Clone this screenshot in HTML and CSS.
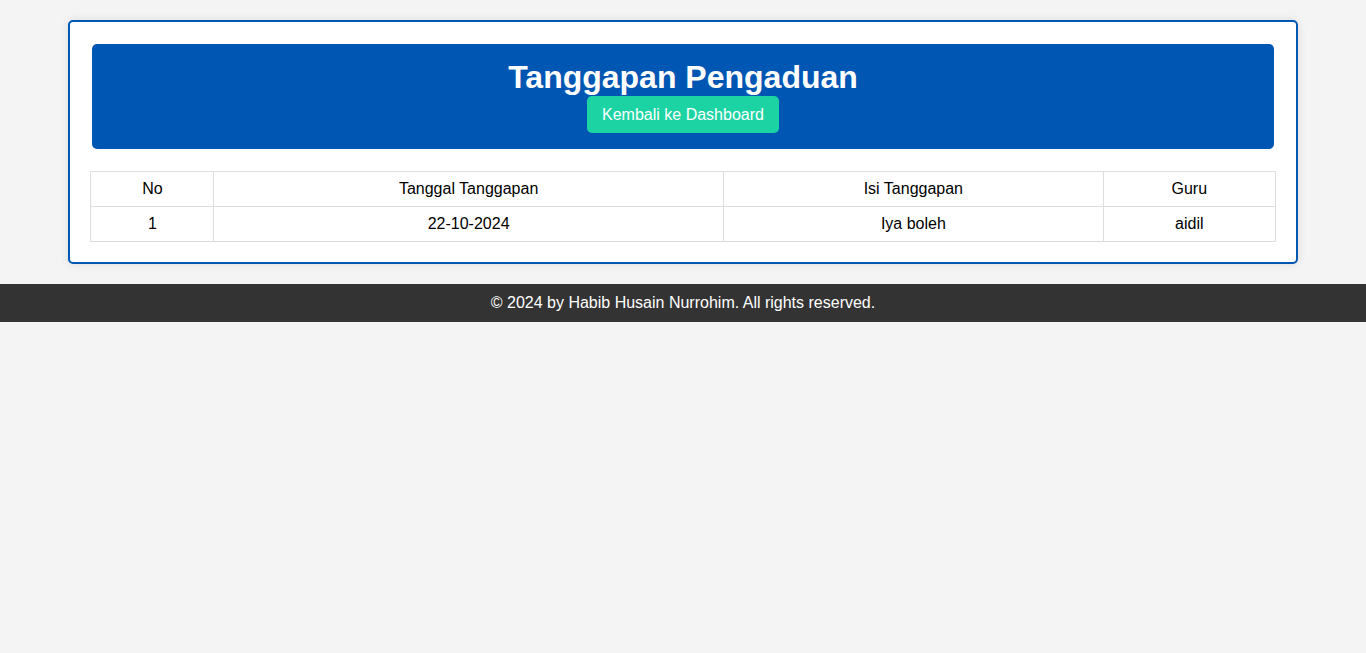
FILE: index.html
```html
<!DOCTYPE html>
<html lang="id">
<head>
<meta charset="utf-8">
<title>Tanggapan Pengaduan</title>
<link rel="stylesheet" href="styles.css">
</head>
<body>
<div class="container">
  <div class="header">
    <h1 class="title">Tanggapan Pengaduan</h1>
    <a class="btn" href="#">Kembali ke Dashboard</a>
  </div>
  <table class="data">
    <thead>
      <tr>
        <th class="c-no">No</th>
        <th class="c-date">Tanggal Tanggapan</th>
        <th class="c-isi">Isi Tanggapan</th>
        <th class="c-guru">Guru</th>
      </tr>
    </thead>
    <tbody>
      <tr>
        <td>1</td>
        <td>22-10-2024</td>
        <td>Iya boleh</td>
        <td>aidil</td>
      </tr>
    </tbody>
  </table>
</div>
<footer class="footer">© 2024 by Habib Husain Nurrohim. All rights reserved.</footer>
</body>
</html>
```

FILE: styles.css
```css
html, body {
  margin: 0;
  padding: 0;
}
body {
  background: #f4f4f4;
  font-family: "Liberation Sans", Arial, sans-serif;
  font-size: 16px;
  color: #000;
}
.container {
  width: 90%;
  margin: 20px auto;
  background: #fff;
  border: 2px solid #0056b3;
  border-radius: 5px;
  padding: 20px;
  box-sizing: border-box;
  box-shadow: 0 0 10px rgba(0, 0, 0, 0.1);
}
.header {
  margin: 2px;
  background: #0056b3;
  border-radius: 5px;
  color: #fff;
  text-align: center;
  padding: 15px 0 16px;
}
.title {
  margin: 0;
  font-size: 32px;
  font-weight: bold;
  line-height: 37px;
}
.btn {
  display: inline-block;
  background: #1cd3a3;
  color: #fff;
  text-decoration: none;
  padding: 10px 15px;
  border-radius: 5px;
  font-size: 16px;
  line-height: 17px;
}
.data {
  width: 100%;
  margin-top: 22px;
  border-collapse: collapse;
}
.data th, .data td {
  border: 1px solid #ddd;
  padding: 8px;
  text-align: center;
  font-weight: normal;
  line-height: 18px;
}
.c-no { width: 10.4%; }
.c-date { width: 43%; }
.c-isi { width: 32.1%; }
.c-guru { width: 14.5%; }
.footer {
  background: #333;
  color: #fff;
  text-align: center;
  padding: 10px 0;
  line-height: 18px;
}
```
